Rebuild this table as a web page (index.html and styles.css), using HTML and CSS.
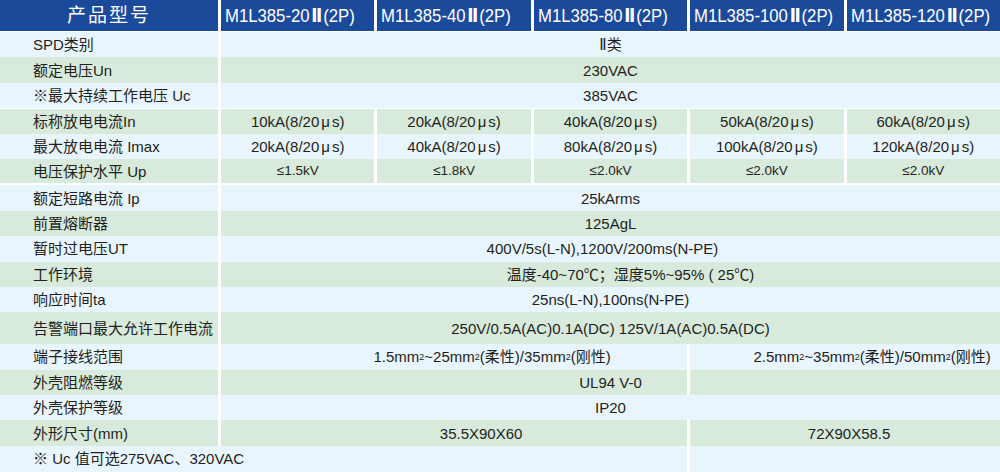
FILE: index.html
```html
<!DOCTYPE html>
<html lang="zh-CN">
<head>
<meta charset="utf-8">
<title>M1L385 参数表</title>
<link rel="stylesheet" href="styles.css">
</head>
<body>
<div class="table">
  <div class="row head">
    <div class="cell lab">产品型号</div>
    <div class="cell model"><span class="cond">M1L385-20<span class="rn">Ⅱ</span>(2P)</span></div>
    <div class="cell model"><span class="cond">M1L385-40<span class="rn">Ⅱ</span>(2P)</span></div>
    <div class="cell model"><span class="cond">M1L385-80<span class="rn">Ⅱ</span>(2P)</span></div>
    <div class="cell model"><span class="cond">M1L385-100<span class="rn">Ⅱ</span>(2P)</span></div>
    <div class="cell model"><span class="cond">M1L385-120<span class="rn">Ⅱ</span>(2P)</span></div>
  </div>
  <div class="row lt"><div class="cell lab">SPD类别</div><div class="cell all"><span class="rn2">Ⅱ</span>类</div></div>
  <div class="row gr"><div class="cell lab">额定电压Un</div><div class="cell all">230VAC</div></div>
  <div class="row lt"><div class="cell lab">※最大持续工作电压 Uc</div><div class="cell all">385VAC</div></div>
  <div class="row gr multi top"><div class="cell lab">标称放电电流In</div><div class="cell">10kA(8/20<span class="mu">μ</span>s)</div><div class="cell">20kA(8/20<span class="mu">μ</span>s)</div><div class="cell">40kA(8/20<span class="mu">μ</span>s)</div><div class="cell">50kA(8/20<span class="mu">μ</span>s)</div><div class="cell">60kA(8/20<span class="mu">μ</span>s)</div></div>
  <div class="row lt multi"><div class="cell lab">最大放电电流 Imax</div><div class="cell">20kA(8/20<span class="mu">μ</span>s)</div><div class="cell">40kA(8/20<span class="mu">μ</span>s)</div><div class="cell">80kA(8/20<span class="mu">μ</span>s)</div><div class="cell">100kA(8/20<span class="mu">μ</span>s)</div><div class="cell">120kA(8/20<span class="mu">μ</span>s)</div></div>
  <div class="row gr multi bottom"><div class="cell lab">电压保护水平 Up</div><div class="cell sm">≤1.5kV</div><div class="cell sm">≤1.8kV</div><div class="cell sm">≤2.0kV</div><div class="cell sm">≤2.0kV</div><div class="cell sm">≤2.0kV</div></div>
  <div class="row lt"><div class="cell lab">额定短路电流 Ip</div><div class="cell all">25kArms</div></div>
  <div class="row gr"><div class="cell lab">前置熔断器</div><div class="cell all">125AgL</div></div>
  <div class="row lt"><div class="cell lab">暂时过电压UT</div><div class="cell all shift-l">400V/5s(L-N),1200V/200ms(N-PE)</div></div>
  <div class="row gr"><div class="cell lab">工作环境</div><div class="cell all shift-r">温度-40~70℃；湿度5%~95% ( 25℃)</div></div>
  <div class="row lt"><div class="cell lab">响应时间ta</div><div class="cell all">25ns(L-N),100ns(N-PE)</div></div>
  <div class="row gr tall"><div class="cell lab">告警端口最大允许工作电流</div><div class="cell all">250V/0.5A(AC)0.1A(DC) 125V/1A(AC)0.5A(DC)</div></div>
  <div class="row lt"><div class="cell lab">端子接线范围</div><div class="cell left3 pad-a">1.5mm<sup>2</sup>~25mm<sup>2</sup>(柔性)/35mm<sup>2</sup>(刚性)</div><div class="cell right2 pad-b">2.5mm<sup>2</sup>~35mm<sup>2</sup>(柔性)/50mm<sup>2</sup>(刚性)</div></div>
  <div class="row gr"><div class="cell lab">外壳阻燃等级</div><div class="cell all split">UL94 V-0</div></div>
  <div class="row lt"><div class="cell lab">外壳保护等级</div><div class="cell all">IP20</div></div>
  <div class="row gr"><div class="cell lab">外形尺寸(mm)</div><div class="cell left3 pad-c">35.5X90X60</div><div class="cell right2 pad-d">72X90X58.5</div></div>
  <div class="row lt last"><div class="cell note">※ Uc 值可选275VAC、320VAC</div><div class="cell right2"></div></div>
</div>
</body>
</html>
```
FILE: styles.css
```css
html, body {
  margin: 0;
  padding: 0;
  background: #ffffff;
}

body {
  width: 1000px;
  height: 472px;
  overflow: hidden;
  font-family: "Liberation Sans", "Noto Sans CJK SC", sans-serif;
  font-size: 15px;
  color: #231f20;
}

.table {
  display: flex;
  flex-direction: column;
  height: 472px;
}

.row {
  display: grid;
  grid-template-columns: 218px repeat(5, 1fr);
  column-gap: 3px;
  height: 25.4px;
  flex: none;
}

.cell {
  display: flex;
  align-items: center;
  justify-content: center;
  white-space: nowrap;
  min-width: 0;
  line-height: 1;
}

.lt .cell { background: #e9f5fd; }
.gr .cell { background: #d7eadb; }

.lab {
  justify-content: flex-start;
  padding-left: 33px;
}

.all { grid-column: 2 / 7; }
.left3 { grid-column: 2 / 5; }
.right2 { grid-column: 5 / 7; }

.head {
  height: 31px;
  margin-bottom: 1px;
}

.head .cell {
  background: #1c4a9b;
  color: #ffffff;
}

.head .lab {
  justify-content: center;
  padding-left: 0;
  font-size: 19px;
  letter-spacing: 2px;
}

.model {
  justify-content: flex-start;
  padding-left: 4px;
  overflow: hidden;
  font-size: 19px;
}

.cond {
  display: inline-block;
  transform: scaleX(0.88);
  transform-origin: left center;
}

.rn {
  font-family: "DejaVu Sans", sans-serif;
  font-weight: bold;
  margin: 0 1px 0 2px;
}

.rn2 {
  font-family: "Liberation Sans", "DejaVu Sans", sans-serif;
}

.mu {
  margin: 0 2px;
}

.sm {
  font-size: 13.5px;
}

.top { margin-top: 1px; height: 24.4px; }
.bottom { margin-bottom: 2px; height: 24.4px; }

.tall { height: 32px; }

.shift-l { padding-right: 16px; }
.shift-r { padding-left: 40px; }

.pad-a { padding-left: 76px; }
.pad-b { padding-left: 54px; }
.pad-c { padding-left: 54px; }
.pad-d { padding-left: 8px; }

.split {
  background: linear-gradient(to right, #d7eadb 0, #d7eadb 466px, #ffffff 466px, #ffffff 469px, #d7eadb 469px) !important;
}

sup {
  font-size: 9px;
  line-height: 0;
  vertical-align: 5px;
}

.last {
  flex: 1;
  height: auto;
}

.note {
  grid-column: 1 / 5;
  justify-content: flex-start;
  padding-left: 33px;
}
```
